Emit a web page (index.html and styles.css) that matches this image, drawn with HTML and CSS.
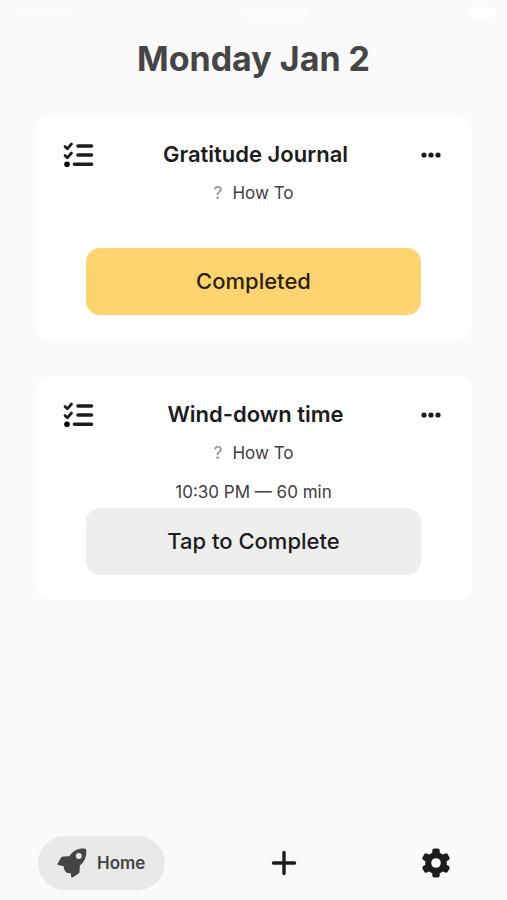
FILE: index.html
```
<!DOCTYPE html>
<html lang="en">
<head>
<meta charset="utf-8">
<meta name="viewport" content="width=device-width, initial-scale=1">
<title>Daily habits</title>
<link rel="stylesheet" href="styles.css">
</head>
<body>
<div class="app">
  <div class="status" aria-hidden="true">
    <span class="smudge"></span>
    <span class="smudge smudge-mid"></span>
    <span class="smudge smudge-end"></span>
  </div>
  <header><h1>Monday Jan 2</h1></header>
  <main>
    <article class="card">
      <div class="card-head">
        <svg class="list-icon" viewBox="0 0 32 26" aria-hidden="true">
          <path d="M2 4.500 4.300 6.800 8.500 2M2 13.500 4.300 15.800 8.500 11" stroke-width="2.700"/>
          <path d="M15 4h13.500M15 13h13.500M11.500 22.300H28.500" stroke-width="3.600"/>
          <circle cx="4" cy="22.300" r="2.800"/>
        </svg>
        <h2>Gratitude Journal</h2>
        <button class="more" aria-label="More options">
          <svg viewBox="0 0 22 8" aria-hidden="true"><circle cx="4" cy="4" r="2.600"/><circle cx="11" cy="4" r="2.600"/><circle cx="18" cy="4" r="2.600"/></svg>
        </button>
      </div>
      <a class="how" href="#how-to"><span class="question">?</span>How To</a>
      <p class="time"></p>
      <button class="action done">Completed</button>
    </article>
    <article class="card">
      <div class="card-head">
        <svg class="list-icon" viewBox="0 0 32 26" aria-hidden="true">
          <path d="M2 4.500 4.300 6.800 8.500 2M2 13.500 4.300 15.800 8.500 11" stroke-width="2.700"/>
          <path d="M15 4h13.500M15 13h13.500M11.500 22.300H28.500" stroke-width="3.600"/>
          <circle cx="4" cy="22.300" r="2.800"/>
        </svg>
        <h2>Wind-down time</h2>
        <button class="more" aria-label="More options">
          <svg viewBox="0 0 22 8" aria-hidden="true"><circle cx="4" cy="4" r="2.600"/><circle cx="11" cy="4" r="2.600"/><circle cx="18" cy="4" r="2.600"/></svg>
        </button>
      </div>
      <a class="how" href="#how-to"><span class="question">?</span>How To</a>
      <p class="time">10:30 PM — 60 min</p>
      <button class="action">Tap to Complete</button>
    </article>
  </main>
  <nav>
    <a class="home" href="#home">
      <svg viewBox="0 0 32 32" aria-hidden="true">
        <path fill-rule="evenodd" d="M28.500 1.600Q30.300 1.700 30.300 3.300C30.600 9.500 28.800 14.500 23.800 18.800L23.600 24.500Q23.500 26 22.300 26.700L16.800 30.200Q15.200 30.900 15.100 29.500L14.700 26C12.500 26.800 10.500 26 9.300 24.300S7.600 21 7.800 19.300L2.300 18Q.9 17.800 1.700 16.500L4.700 10.900Q5.600 9.600 7.100 9.500L13.200 9.300C17.200 3.700 22 1.200 28.500 1.600ZM22.800 6.100a2.900 2.900 0 1 0 0 5.800 2.900 2.900 0 0 0 0-5.800Z"/>
      </svg>
      <span>Home</span>
    </a>
    <button class="nav-button" aria-label="Add habit">
      <svg viewBox="0 0 30 30" aria-hidden="true"><path class="plus" d="M15 5.700v18.600M5.700 15h18.600"/></svg>
    </button>
    <button class="nav-button settings" aria-label="Settings">
      <svg viewBox="0 0 34 34" aria-hidden="true">
        <g class="gear">
          <circle cx="17" cy="17" r="10.800"/>
          <rect x="13.300" y="2.500" width="7.400" height="29" rx="2"/>
          <rect x="13.300" y="2.500" width="7.400" height="29" rx="2" transform="rotate(60 17 17)"/>
          <rect x="13.300" y="2.500" width="7.400" height="29" rx="2" transform="rotate(120 17 17)"/>
        </g>
        <circle class="gear-hole" cx="17" cy="17" r="4.800"/>
      </svg>
    </button>
  </nav>
</div>
</body>
</html>
```
FILE: styles.css
```
* { box-sizing: border-box; }

body {
  margin: 0;
  background: #fafafa;
  color: #1c1c1c;
  font-family: Inter, "Liberation Sans", sans-serif;
}

.app {
  min-height: 100vh;
  display: flex;
  flex-direction: column;
}

.status {
  height: 26px;
  padding: 0 12px;
  display: flex;
  justify-content: space-between;
  align-items: center;
}

.smudge {
  width: 64px;
  height: 6px;
  border-radius: 3px;
  background: #fff;
  filter: blur(2px);
  opacity: 0.3;
}

.smudge-mid { opacity: 0.7; }
.smudge-end { width: 24px; height: 10px; opacity: 1; }

h1, h2, p { margin: 0; }

h1 {
  padding: 13px 0 37px;
  color: #454545;
  font-size: 34px;
  font-weight: 700;
  line-height: 40px;
  text-align: center;
}

main {
  padding: 0 36px;
  display: flex;
  flex-direction: column;
  gap: 36px;
}

.card {
  padding: 23px 24px 25px;
  display: flex;
  flex-direction: column;
  align-items: center;
  background: #fff;
  border-radius: 14px;
}

.card-head {
  width: 100%;
  display: grid;
  grid-template-columns: 36px 1fr 32px;
  align-items: center;
}

h2 {
  padding-bottom: 2px;
  font-size: 22px;
  font-weight: 600;
  line-height: 30px;
  text-align: center;
}

button {
  border: 0;
  padding: 0;
  background: none;
  color: inherit;
  font-family: inherit;
  cursor: pointer;
}

a { color: inherit; text-decoration: none; }
svg { display: block; }

.list-icon {
  width: 32px;
  height: 26px;
  margin-left: 3px;
}

.list-icon path {
  fill: none;
  stroke: #1c1c1c;
  stroke-linecap: round;
  stroke-linejoin: round;
}

.more {
  display: flex;
  justify-content: center;
}

.more svg { width: 22px; height: 8px; fill: #1c1c1c; }

.how {
  margin-top: 10px;
  display: flex;
  gap: 10px;
  color: #404040;
  font-size: 17px;
  line-height: 24px;
}

.question { color: #999; font-weight: 500; }

.time {
  min-height: 24px;
  margin: 15px 0 4px;
  color: #404040;
  font-size: 17px;
  line-height: 24px;
}

.action {
  align-self: stretch;
  height: 67px;
  margin: 0 26px;
  padding-bottom: 2px;
  border-radius: 14px;
  background: #eee;
  font-size: 22px;
  font-weight: 500;
}

.done { background: #ffd470; color: #2b2108; }

nav {
  margin-top: auto;
  padding: 0 54px 10px 38px;
  display: flex;
  justify-content: space-between;
  align-items: center;
}

.home {
  height: 54px;
  padding: 0 20px 0 18px;
  display: flex;
  align-items: center;
  gap: 9px;
  border-radius: 27px;
  background: #e9e9e9;
  color: #454545;
  font-size: 17px;
  font-weight: 600;
}

.home svg { width: 32px; height: 32px; fill: #454545; }

.nav-button svg { width: 34px; height: 34px; }

.settings { padding-left: 17px; }

.plus {
  fill: none;
  stroke: #1c1c1c;
  stroke-width: 3;
  stroke-linecap: round;
}

.gear { fill: #1c1c1c; }
.gear-hole { fill: #fafafa; }
```
